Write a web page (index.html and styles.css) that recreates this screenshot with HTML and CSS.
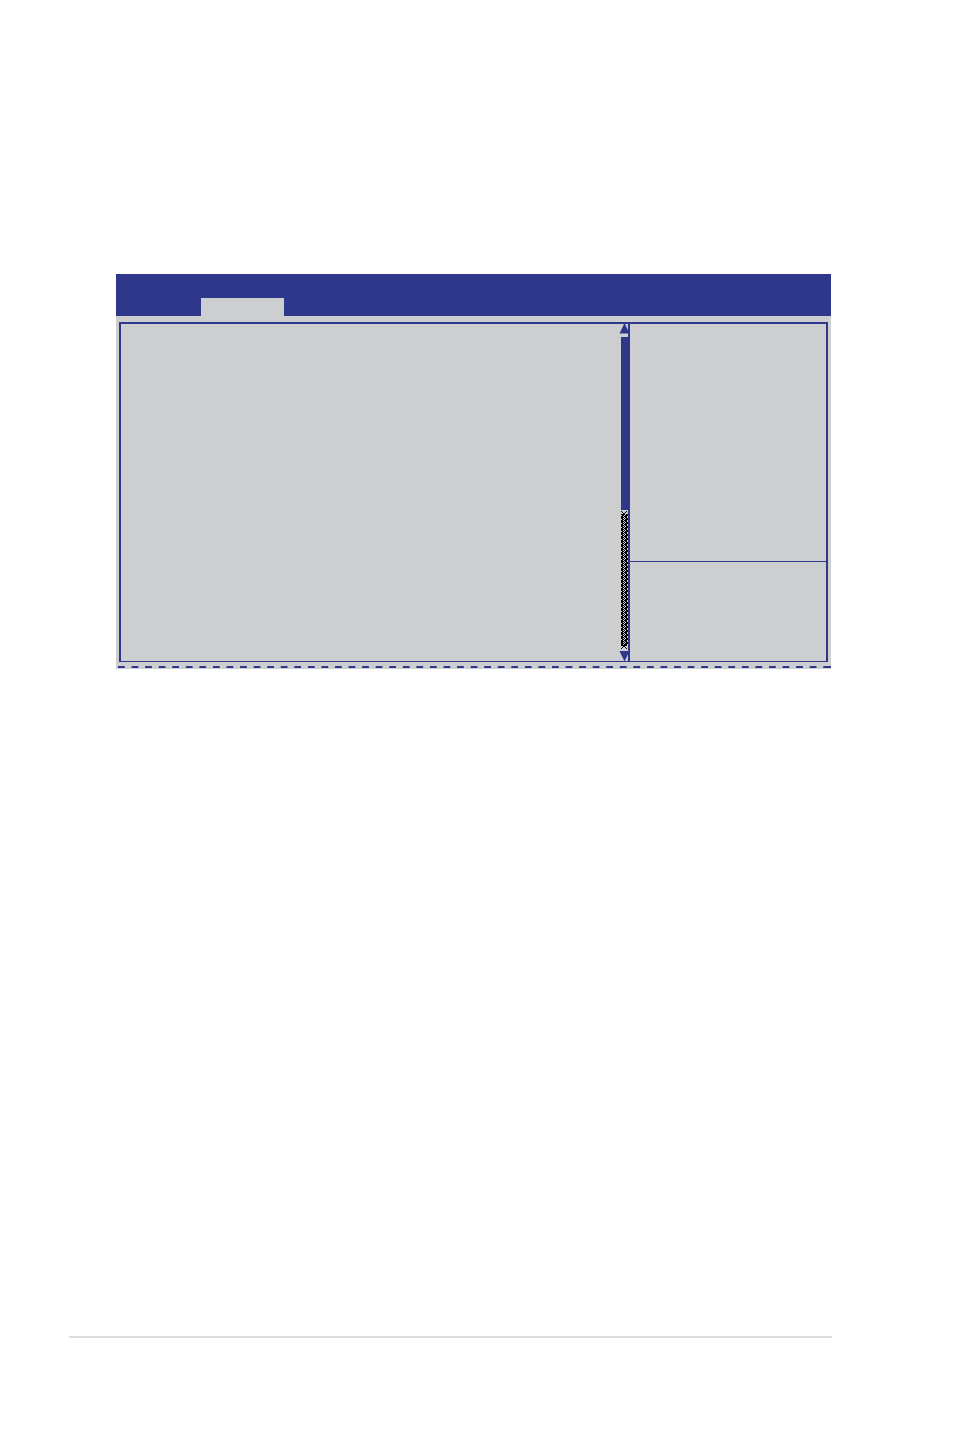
FILE: index.html
```html
<!DOCTYPE html>
<html lang="en">
<head>
    <meta charset="UTF-8">
    <meta name="viewport" content="width=device-width, initial-scale=1.0">
    <title>Setup</title>
    <link rel="stylesheet" href="styles.css">
</head>
<body>
    <main class="page">
        <section class="screen">
            <!-- Title bar with the active tab -->
            <header class="menu-bar">
                <div class="tab"></div>
            </header>

            <div class="frame">
                <div class="items"></div>

                <!-- Scroll bar -->
                <div class="scrollbar">
                    <svg class="arrow" viewBox="0 0 11 10" aria-hidden="true">
                        <path d="M5.5 -1L10.5 9.5H0.5Z"/>
                    </svg>
                    <div class="thumb"></div>
                    <svg class="track" viewBox="0 0 8 141" preserveAspectRatio="none" aria-hidden="true">
                        <defs>
                            <pattern id="hatch" width="7" height="4" patternUnits="userSpaceOnUse">
                                <path d="M0 0h2v1h-2zM3 0h1v1h-1zM5 0h2v1h-2zM1 1h2v1h-2zM4 1h3v1h-3zM0 2h2v1h-2zM3 2h3v1h-3zM0 3h3v1h-3zM4 3h2v1h-2z"/>
                            </pattern>
                        </defs>
                        <path class="cross" d="M0 1L6 7M6 1L0 7M0 133L6 139M6 133L0 139"/>
                        <rect y="4" width="7" height="132" fill="url(#hatch)"/>
                    </svg>
                    <svg class="arrow" viewBox="0 0 11 10" aria-hidden="true">
                        <path d="M0.5 0H10.5L5.5 10.5Z"/>
                    </svg>
                </div>

                <aside class="side">
                    <div class="help"></div>
                    <div class="keys"></div>
                </aside>
            </div>

            <div class="dashes"></div>
        </section>

        <footer class="page-footer"></footer>
    </main>
</body>
</html>
```

FILE: styles.css
```css
* {
    margin: 0;
    padding: 0;
    box-sizing: border-box;
}

body {
    background-color: #ffffff;
    font-family: "Liberation Sans", Arial, sans-serif;
}

.page {
    display: flex;
    flex-direction: column;
    min-height: 100vh;
    padding: 274px 122px 99px 69px;
}

.screen {
    margin: 0 1px 0 47px;
    background-color: #cdced0;
}

.menu-bar {
    display: flex;
    align-items: flex-end;
    height: 42px;
    padding-left: 85px;
    background-color: #2f378b;
}

.tab {
    width: 83px;
    height: 18px;
    background-color: #cdced0;
}

.frame {
    display: flex;
    height: 340px;
    margin: 6px 3px 0;
    border: 2px solid #2f378b;
    border-bottom-width: 1px;
}

.items {
    flex: 1;
}

/* Scroll bar */
.scrollbar {
    display: flex;
    flex-direction: column;
    width: 11px;
    margin-right: -2px;
}

.arrow {
    width: 11px;
    height: 10px;
    overflow: visible;
    fill: #2f378b;
}

.thumb {
    flex: 173;
    width: 8px;
    margin: 3px 0 0 2px;
    background-color: #2f378b;
}

.track {
    flex: 141;
    width: 8px;
    min-height: 0;
    margin-left: 2px;
}

.cross {
    fill: none;
    stroke: #000000;
    stroke-width: 1;
}

/* Right column */
.side {
    display: flex;
    flex-direction: column;
    width: 198px;
    border-left: 2px solid #2f378b;
}

.help {
    height: 238px;
    border-bottom: 1px solid #2f378b;
}

.keys {
    flex: 1;
}

/* Row of dashes, closed by one more dash at the right end */
.dashes {
    display: flex;
    margin-top: 4px;
    padding: 0 0 1px 2px;
}

.dashes::before {
    content: "";
    flex: 1;
    height: 2px;
    background-image: linear-gradient(90deg, #2f378b 50%, transparent 50%);
    background-size: calc(100% / 52) 2px;
}

.dashes::after {
    content: "";
    width: 7px;
    height: 2px;
    background-color: #2f378b;
}

.page-footer {
    margin-top: auto;
    border-top: 2px solid #dcdcdc;
}
```
